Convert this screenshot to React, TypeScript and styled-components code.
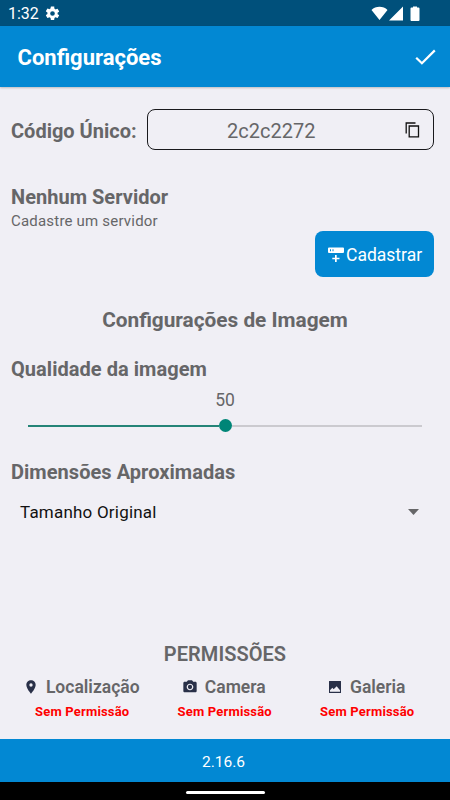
import React from "react";
import styled, { createGlobalStyle } from "styled-components";

const Global = createGlobalStyle`
  * { box-sizing: border-box; }
  body { margin: 0; background: #f0eff5; font-family: Roboto, sans-serif; }
`;

const Screen = styled.div`
  width: 450px;
  height: 800px;
  display: flex;
  flex-direction: column;
  background: #f0eff5;
  color: #666668;
  overflow: hidden;
`;

const StatusBar = styled.div`
  height: 26px;
  flex: none;
  display: flex;
  align-items: center;
  gap: 5px;
  background: #00507b;
  color: #fff;
  padding: 1px 30px 0 8px;
`;

const Spacer = styled.div`
  flex: 1;
`;

const Header = styled.header`
  height: 61px;
  flex: none;
  display: flex;
  align-items: center;
  justify-content: space-between;
  background: #0288d3;
  color: #fff;
  padding: 2px 14px 0 17.5px;
  box-shadow: 0 1px 2px rgba(0, 0, 0, 0.22);
`;

const Label = styled.span<{ $size: number; $weight?: number; $spacing?: number; $color?: string }>`
  display: block;
  white-space: nowrap;
  font-size: ${(p) => p.$size}px;
  line-height: 24px;
  font-weight: ${(p) => p.$weight ?? 400};
  letter-spacing: ${(p) => p.$spacing ?? 0}px;
  color: ${(p) => p.$color ?? "inherit"};
`;

const Icon = styled.svg<{ $gap?: number }>`
  display: block;
  flex: none;
  margin-right: ${(p) => p.$gap ?? 0}px;
`;

const Content = styled.main`
  flex: 1;
  display: flex;
  flex-direction: column;
  padding: 22px 16px 0 11px;
`;

const CodeRow = styled.div`
  height: 41px;
  display: flex;
  align-items: center;
  justify-content: space-between;
`;

const CodeLabel = styled.div`
  padding-top: 2px;
`;

const CodeField = styled.div`
  width: 287px;
  height: 41px;
  border: 1px solid #19191c;
  border-radius: 8px;
  display: flex;
  align-items: center;
  padding: 2px 13px 0 79px;
  justify-content: space-between;
`;

const Server = styled.section`
  margin-top: 35px;
  display: flex;
  flex-direction: column;
`;

const RegisterButton = styled.button`
  align-self: flex-end;
  width: 119px;
  height: 46px;
  margin-top: -2px;
  border: 0;
  border-radius: 8px;
  background: #0288d3;
  color: #fff;
  font-family: inherit;
  display: flex;
  align-items: center;
  padding: 1px 0 0 13px;
`;

const SectionTitle = styled.div<{ $top: number }>`
  display: flex;
  justify-content: center;
  margin: ${(p) => p.$top}px -5px 0 0;
`;

const Field = styled.div<{ $top: number }>`
  margin-top: ${(p) => p.$top}px;
`;

const Value = styled.div`
  display: flex;
  justify-content: center;
  margin: 7px -5px 0 0;
`;

const Slider = styled.div`
  display: grid;
  grid-template-columns: 191px 13px 190px;
  align-items: center;
  height: 13px;
  margin: 7px 0 0 17px;
`;

const Track = styled.div<{ $color: string }>`
  height: 2px;
  background: ${(p) => p.$color};
`;

const Thumb = styled.div`
  width: 13px;
  height: 13px;
  border-radius: 50%;
  background: #008577;
`;

const Select = styled.div`
  display: flex;
  align-items: center;
  justify-content: space-between;
  margin-top: 16px;
  padding: 0 15px 0 9px;
`;

const Permissions = styled.div`
  display: grid;
  grid-template-columns: repeat(3, 142.5px);
  margin-top: 8px;
`;

const Permission = styled.div`
  display: flex;
  flex-direction: column;
  align-items: center;
`;

const PermissionName = styled.div`
  display: flex;
  align-items: center;
  height: 26px;
  padding-right: 2px;
`;

const Version = styled.footer`
  height: 43px;
  flex: none;
  display: flex;
  justify-content: center;
  align-items: center;
  background: #0288d3;
  color: #fff;
  padding: 2px 3px 0 0;
`;

const NavBar = styled.div`
  height: 18px;
  flex: none;
  display: flex;
  justify-content: center;
  align-items: center;
  background: #000;
  padding-top: 2px;
`;

const Handle = styled.div`
  width: 79px;
  height: 3px;
  border-radius: 2px;
  background: #fff;
`;

const NAVY = "#293048";

const permissions = [
  {
    name: "Localização",
    icon: "M12 2C8.1 2 5 5.1 5 9c0 5.2 7 13 7 13s7-7.800 7-13c0-3.900-3.100-7-7-7zm0 9.500a2.500 2.500 0 1 1 0-5 2.500 2.500 0 0 1 0 5z",
  },
  {
    name: "Camera",
    icon: "M9 2 7.170 4H4c-1.100 0-2 .9-2 2v12c0 1.100.9 2 2 2h16c1.100 0 2-.9 2-2V6c0-1.100-.9-2-2-2h-3.170L15 2H9zm3 15c-2.760 0-5-2.240-5-5s2.240-5 5-5 5 2.240 5 5-2.240 5-5 5zM12 8.800a3.200 3.200 0 1 0 0 6.400 3.200 3.200 0 0 0 0-6.400z",
  },
  {
    name: "Galeria",
    icon: "M21 20.500V3.500q0-.5-.5-.5H3.500q-.5 0-.5.5v17q0 .5.500.5h17q.5 0 .5-.5zM4.500 19v-2l3.500-4 2 2.500 4.500-4.500 5 6v2z",
  },
];

export default function App() {
  return (
    <>
      <Global />
      <Screen>
        <StatusBar>
          <Label $size={16}>1:32</Label>
          <Icon width="17" height="17" viewBox="0 0 24 24" fill="#fff">
            <path d="M19.140 12.940c.04-.3.060-.61.060-.94s-.02-.64-.07-.94l2.030-1.580a.49.49 0 0 0 .12-.61l-1.920-3.320a.49.49 0 0 0-.59-.22l-2.390.96a7 7 0 0 0-1.620-.94l-.36-2.540A.48.48 0 0 0 13.920 2h-3.840a.48.48 0 0 0-.47.41l-.36 2.540a7 7 0 0 0-1.620.94l-2.390-.96a.49.49 0 0 0-.59.22L2.740 8.470a.49.49 0 0 0 .12.61l2.030 1.580a7 7 0 0 0 0 1.880l-2.030 1.580a.49.49 0 0 0-.12.61l1.920 3.320c.12.22.37.29.59.22l2.390-.96c.5.38 1.030.7 1.620.94l.36 2.540c.05.24.24.41.47.41h3.840c.24 0 .44-.17.47-.41l.36-2.540a7 7 0 0 0 1.620-.94l2.390.96c.22.080.47 0 .59-.22l1.920-3.320a.49.49 0 0 0-.12-.61zM12 15.300a3.300 3.300 0 1 1 0-6.600 3.300 3.300 0 0 1 0 6.600z" />
          </Icon>
          <Spacer />
          <Icon width="49" height="16" viewBox="0 0 49 16" fill="#fff">
            <path d="M.5 4C4.500-.2 12.500-.2 16.500 4L8.500 14zM32 .5V14.500H18zM39.500 2.500q0-1 1-1h1.500V.5h4v1h1.500q1 0 1 1v11.500q0 1-1 1h-7q-1 0-1-1z" />
          </Icon>
        </StatusBar>
        <Header>
          <Label $size={22} $weight={700}>Configurações</Label>
          <Icon width="22" height="18" viewBox="0 0 22 18" fill="none" stroke="#fff" strokeWidth="2.200">
            <path d="M2.200 8.700 7.900 14.300 20.800 1.400" />
          </Icon>
        </Header>
        <Content>
          <CodeRow>
            <CodeLabel><Label $size={20} $weight={700}>Código Único:</Label></CodeLabel>
            <CodeField>
              <Label $size={20}>2c2c2272</Label>
              <Icon width="15" height="17" viewBox="0 0 15 17" fill="none" stroke="#111" strokeWidth="1.300">
                <path d="M1.200 11.500V1H10.500M4.200 4H13.500V14.800H4.200z" />
              </Icon>
            </CodeField>
          </CodeRow>
          <Server>
            <Label $size={20} $weight={700} $spacing={0.03}>Nenhum Servidor</Label>
            <Label $size={15} $spacing={0.2}>Cadastre um servidor</Label>
            <RegisterButton>
              <Icon width="16" height="16" viewBox="0 0 16 16" fill="#fff" $gap={2}>
                <path fillRule="evenodd" d="M1 .5H15q1 0 1 1V5q0 1-1 1H1Q0 6 0 5V1.500q0-1 1-1zM2 2.200V4.200H3V2.200zM4.500 2.200V4.200H5.500V2.200zM7 8H8.700V10.700H11.500V12.300H8.700V15H7V12.300H4.300V10.700H7z" />
              </Icon>
              <Label $size={17.500}>Cadastrar</Label>
            </RegisterButton>
          </Server>
          <SectionTitle $top={31}>
            <Label $size={20.800} $weight={700}>Configurações de Imagem</Label>
          </SectionTitle>
          <Field $top={25}>
            <Label $size={20} $weight={700} $spacing={0.04}>Qualidade da imagem</Label>
            <Value><Label $size={17.500}>50</Label></Value>
            <Slider>
              <Track $color="#258477" />
              <Thumb />
              <Track $color="#cbcacf" />
            </Slider>
          </Field>
          <Field $top={28}>
            <Label $size={20} $weight={700} $spacing={0.04}>Dimensões Aproximadas</Label>
            <Select>
              <Label $size={17} $spacing={0.21} $color="#111">Tamanho Original</Label>
              <Icon width="11" height="6" viewBox="0 0 11 6" fill="#666668">
                <path d="M0 0H11L5.500 6z" />
              </Icon>
            </Select>
          </Field>
          <SectionTitle $top={118}>
            <Label $size={20} $weight={600} $spacing={0.05}>PERMISSÕES</Label>
          </SectionTitle>
          <Permissions>
            {permissions.map((p) => (
              <Permission key={p.name}>
                <PermissionName>
                  <Icon width="16" height="16" viewBox="0 0 24 24" fill={NAVY} $gap={7}>
                    <path fillRule="evenodd" d={p.icon} />
                  </Icon>
                  <Label $size={17.500} $weight={600}>{p.name}</Label>
                </PermissionName>
                <Label $size={13} $weight={700} $spacing={0.18} $color="#ff0000">Sem Permissão</Label>
              </Permission>
            ))}
          </Permissions>
        </Content>
        <Version><Label $size={15.500}>2.16.6</Label></Version>
        <NavBar><Handle /></NavBar>
      </Screen>
    </>
  );
}
